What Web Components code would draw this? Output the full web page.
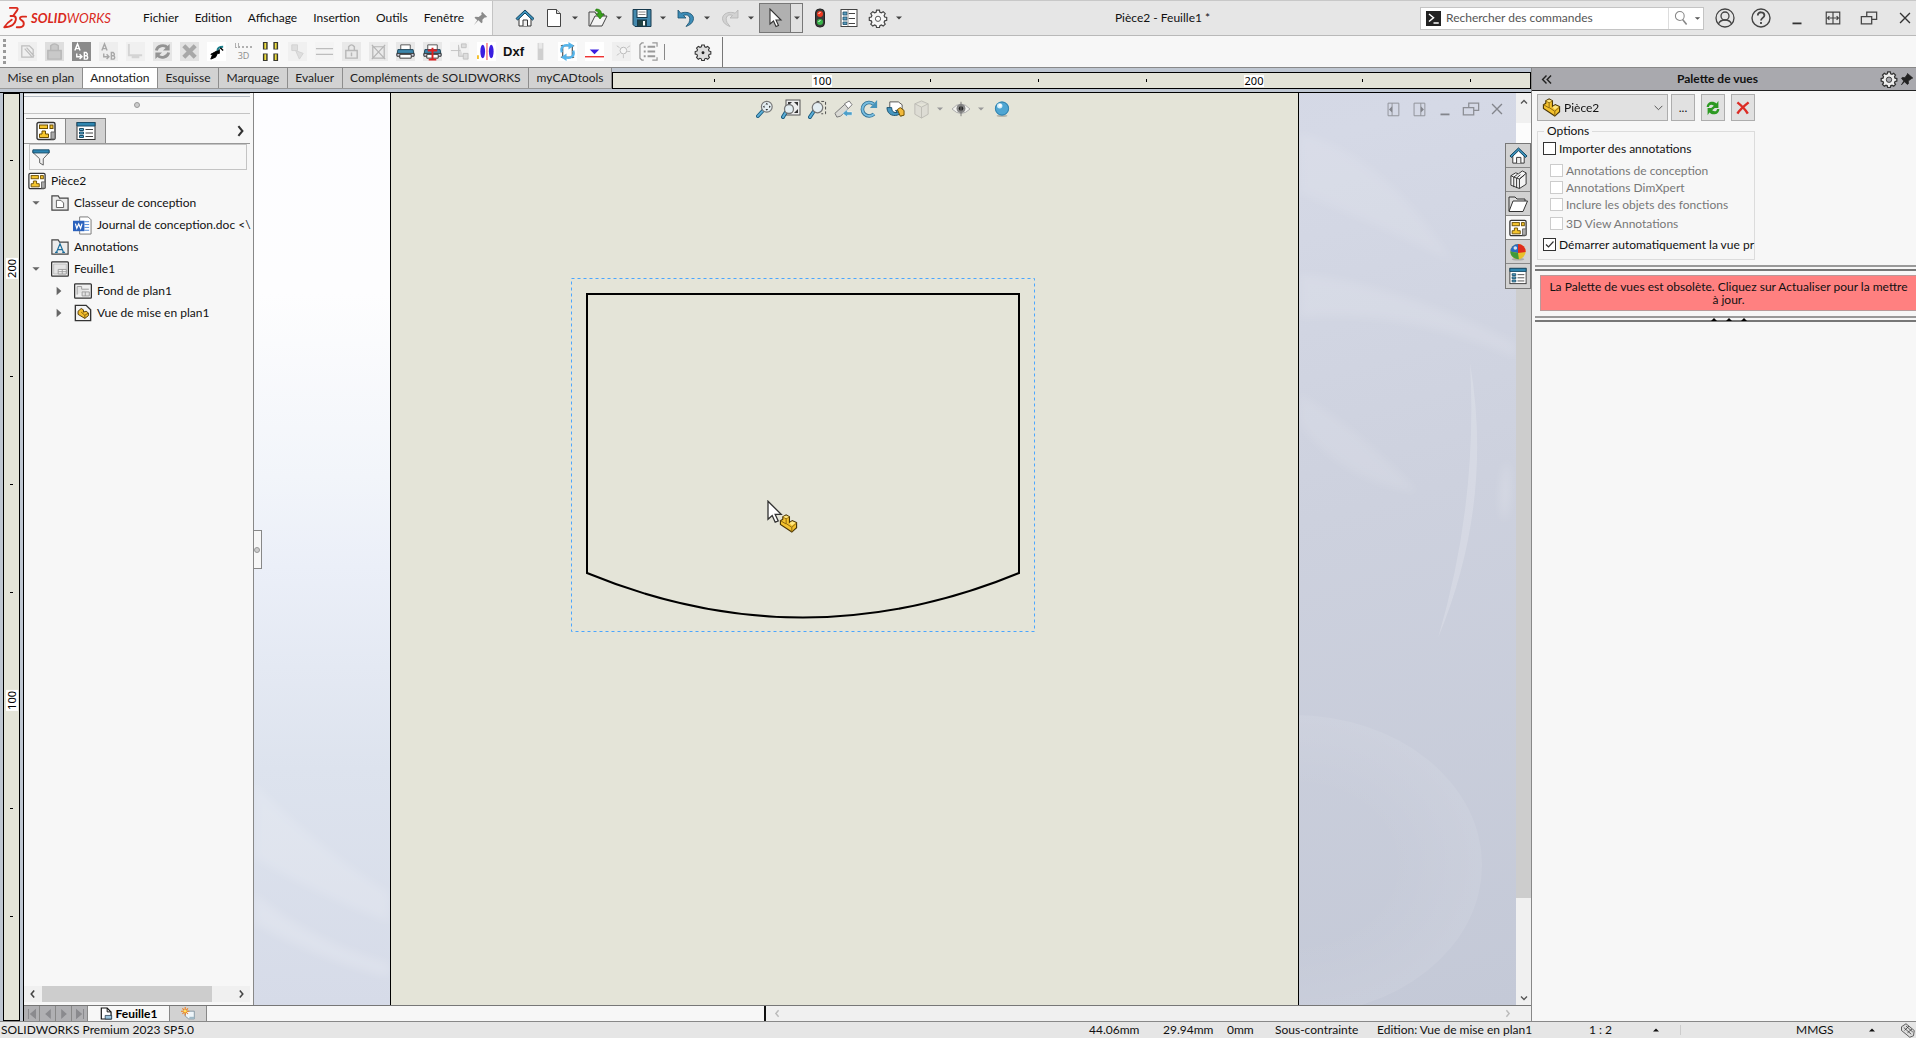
<!DOCTYPE html>
<html lang="fr">
<head>
<meta charset="utf-8">
<title>Pièce2 - Feuille1 *</title>
<style>
html,body{margin:0;height:100%}
body{font:12px/16px Lato,"Open Sans",sans-serif;color:#111;background:#f7f7f7;overflow:hidden}
</style>
</head>
<body>
<sw-app></sw-app>
<script>
const D='#333';
const gearPath='M8.6 2.2h2.8l.5 2 1.5.6 1.8-1.1 2 2-1.1 1.8.6 1.5 2 .5v2.8l-2 .5-.6 1.5 1.1 1.8-2 2-1.8-1.1-1.5.6-.5 2H8.6l-.5-2-1.5-.6-1.8 1.1-2-2 1.1-1.8-.6-1.5-2-.5V9.5l2-.5.6-1.5-1.1-1.8 2-2 1.8 1.1 1.5-.6z';
const house=`<path d="M4 9v9h12V9l-6-6z" fill="#fff" stroke="${D}"/><path d="M8 18v-6h4.5v6" fill="#eee" stroke="${D}"/><path d="M1 10.500 10 2l9 8.500-1.600 1.600L10 5l-7.400 7.100z" fill="#3d93bd" stroke="#12435e"/>`;
const part=`<path d="M1.500 7 4 5.500V3l3.500-2L11 3v6l3-2 4.500 2v5.500L13.500 19 1.500 11z" fill="#f3c12c" stroke="#4a3608" stroke-width="1.200"/><path d="M4 3l3.500 2L11 3M7.500 5v5l6 4 5-4.500M13.500 14v5M1.500 7l6 3.500" fill="none" stroke="#8a650d"/><path d="M4.500 3l3-1.500 3 1.500-3 1.500zM11 9.500l3-1.800 3.500 1.500-4 3z" fill="#ffe67f"/>`;
const drawing=`<rect x="1" y="1.500" width="18" height="17" rx="1.500" fill="#fff" stroke="#333" stroke-width="1.400"/><rect x="3.500" y="4" width="8" height="3.500" fill="#f6c62e" stroke="#6b4d00"/><rect x="14" y="4" width="3" height="3.500" fill="#f6c62e" stroke="#6b4d00"/><path d="M6 10h3.500v3h3v3.500h-9V13H6z" fill="#f6c62e" stroke="#6b4d00"/><path d="M15 11h4v7h-4z" fill="#aaa" stroke="#666"/>`;
const list=`<rect x="1" y="1.500" width="18" height="17" fill="#fff" stroke="#333"/><path d="M1 1.500h18v3.500H1z" fill="#2f86b0" stroke="#1a4d68"/><path d="M3.500 7.500h4v2h-4zM3.500 11h4v2h-4zM3.500 14.500h4v2h-4z" fill="#55a8cf" stroke="#1a4d68"/><path d="M9.500 8.500H17M9.500 12H17M9.500 15.500H17" stroke="#444"/>`;
const printer=`<path d="M5 8V3h10v5" fill="#fff" stroke="#555"/><path d="M2 8h16l1 6H1z" fill="#3c86ab" stroke="#1d4557"/><path d="M1 12h18v3H1z" fill="#ccd" stroke="#333"/><path d="M4 13h12v4H4z" fill="#fff" stroke="#333"/>`;
const magn=(x,y,r)=>`<path d="M${x-r*.7} ${y+r*.7} 2 18" stroke="#1c5d80" stroke-width="4" stroke-linecap="round"/><path d="M${x-r*.7} ${y+r*.7} 2 18" stroke="#5db0d8" stroke-width="2" stroke-linecap="round"/><circle cx="${x}" cy="${y}" r="${r}" fill="#e4eef2" stroke="#777" stroke-width="1.300"/>`;
const ICONS={
home:house, part, drawing, list,
logo:`<g fill="none" stroke="#da291c" stroke-width="1.500" stroke-linecap="round" stroke-linejoin="round"><path d="M5.500 1.500h5q2 0 .8 2L8 8"/><path d="M6 8h2.500c3 .6 2 5-.8 7.200-1.700 1.300-4 1.800-6.700 1.800 1.500-2.500 3.500-4.500 6-6"/><path d="M18.500 8.500h-3c-2.600.3-2.500 2-.5 3 2.400 1.400 2.300 5.100-1.300 5.500H11"/></g>`,
pin:`<path d="M12 1l7 7-2.500.8-1-.3-3 3.300.2 3.200-1.500 1.300-4-4L1 19l4.800-6.700L2 9l1.300-1.300 4.200.2L11.500 5l-.5-1.800z" fill="#8a8a8a"/>`,
pin2:`<path d="M10 2l7 6-2 1-4 3 .3 3.500-1.500 1L6 13l-4 4 3-5-3-3.500 1-1.300 3.500.3 3-4z" fill="#222" stroke="#222"/>`,
doc:`<path d="M3.500 1.500h9l4 4v13h-13z" fill="#fff" stroke="#444"/><path d="M12.500 1.500v4h4" fill="#ddd" stroke="#444"/>`,
open:`<path d="M1 4h6l1 2h8v2" fill="#eee" stroke="#444"/><path d="M1 4v14h13l5-10H7L2 18" fill="#f4f4f4" stroke="#444"/><path d="M8 1c4 0 5.500 2 5.500 5H16l-4 5-4-5h2.300c0-2-1-3-2.800-3z" fill="#39a31b" stroke="#1c6b0b" stroke-width=".6"/>`,
save:`<path d="M1 1.500h18v17H3l-2-2z" fill="#4489ad" stroke="#16394d"/><rect x="5" y="1.500" width="10" height="8" fill="#fff" stroke="#16394d"/><path d="M6.500 4h7M6.500 6.500h7" stroke="#888"/><rect x="5.500" y="12" width="9" height="6.500" fill="#244" stroke="#16394d"/><rect x="11" y="13" width="2" height="4.500" fill="#fff"/>`,
undo:`<path d="M2 2v8h8L7.500 7.500c4-2 8 1 5.500 7l-3 4c8-2.500 9.500-9.500 5-12.500-3.500-2.300-7.500-1.800-10.200-.8z" fill="#3d8db8" stroke="#1b506d" stroke-width=".8"/>`,
redo:`<path d="M18 2v8h-8l2.500-2.500c-4-2-8 1-5.500 7l3 4C2 16 .5 9 5 6c3.500-2.300 7.500-1.800 10.200-.8z" fill="#d2d2d2" stroke="#b4b4b4" stroke-width=".8"/>`,
cursor:`<path d="M5 1v15l3.500-3 2.500 5.500 2.500-1-2.500-5.500h5z" fill="#fff" stroke="#333" stroke-width="1.100"/>`,
traffic:`<rect x="5.500" y="1" width="9" height="18" rx="4" fill="#3a3a3a" stroke="#222"/><circle cx="10" cy="6" r="3" fill="#ef3a22"/><circle cx="10" cy="14" r="3" fill="#39b54a"/><path d="M8.500 5.500l2-1M8.500 13.500l2-1" stroke="#fff"/>`,
options:`<rect x="2" y="1.500" width="16" height="17" fill="#fff" stroke="#444"/><path d="M4 4h4v3H4zM4 9h4v3H4zM4 14h4v2.500H4z" fill="#5b9dbf" stroke="#1a4d68" stroke-width=".8"/><path d="M9.500 5.500H16M9.500 10.500H16M9.500 15.500H16" stroke="#444"/><path d="M9 2v16" stroke="#999"/>`,
gear:`<path d="${gearPath}" fill="#f7f7f7" stroke="#444" stroke-width="1.200"/><circle cx="10" cy="10.800" r="2.600" fill="#fff" stroke="#555"/>`,
gearfull:`<path d="${gearPath}" fill="#ddd" stroke="#333" stroke-width="1.200"/><circle cx="10" cy="10.800" r="1.600" fill="#222"/>`,
gearlight:`<path d="${gearPath}" fill="#eee" stroke="#333" stroke-width="1.400"/><circle cx="10" cy="10.800" r="3" fill="#a9a9ae" stroke="#333"/>`,
sketch:`<rect width="20" height="20" fill="#efefef"/><path d="M4 4h8l4 4v8H4zM7 7l8 9M9 6l8 9" fill="none" stroke="#bdbdbd" stroke-width="1.300"/>`,
lockpage:`<rect width="20" height="20" fill="#dedede"/><path d="M3 9h14v9H3zM6 9V4q4-4 8 0v5" fill="#c9c9c9" stroke="#b7b7b7" stroke-width="1.500"/>`,
abdark:`<rect width="20" height="20" fill="#8b8b8b"/><path d="M3 9l2.800-7L8.500 9M4 7h4M13 11v7h2.500q2-1.800 0-3.500 1.500-1.800-.5-3.500zM13 14.500h2.500M5 12v3.500h5m-2-2.500 2.500 2.500L8 18" fill="none" stroke="#fff" stroke-width="1.500"/>`,
ablight:`<rect width="20" height="20" fill="#eee"/><path d="M3 9l2.800-7L8.500 9M4 7h4M13 11v7h2.500q2-1.800 0-3.500 1.500-1.800-.5-3.500zM13 14.500h2.500M5 12v3.500h5m-2-2.500 2.500 2.500L8 18" fill="none" stroke="#a8a8a8" stroke-width="1.500"/>`,
monitor:`<rect width="20" height="20" fill="#f0f0f0"/><path d="M3 2v12h14M6 16h8" fill="none" stroke="#d4d4d4" stroke-width="2"/>`,
refreshg:`<rect width="20" height="20" fill="#e6e6e6"/><path d="M3.500 9c1-5 8-7 12-3M16.500 11c-1 5-8 7-12 3" fill="none" stroke="#939393" stroke-width="3"/><path d="M17.500 2v7h-7zM2.500 18v-7h7z" fill="#939393"/>`,
xg:`<rect width="20" height="20" fill="#e2e2e2"/><path d="M4 4l12 12M16 4 4 16" stroke="#a8a8a8" stroke-width="4.500"/>`,
arrowk:`<rect width="20" height="20" fill="#fff"/><path d="M4 18l2-5H4l9-5v4h-2l-2 4z" fill="#000" stroke="#000"/><path d="M11 9c0-3 3-4 6-4" fill="none" stroke="#1b7f8c" stroke-width="2"/><path d="M14 6l3 3" stroke="#000" stroke-width="1.500"/>`,
grid4:`<rect width="20" height="20" fill="#fff"/><path d="M2 0h5v8H2zM13 0h5v8h-5zM2 12h5v8H2zM13 12h5v8h-5z" fill="#3a3a30"/><path d="M4.500 1v6M15.500 1v6M4.500 13v6M15.500 13v6" stroke="#f0e040" stroke-width="2"/>`,
hand:`<rect width="20" height="20" fill="#f0f0f0"/><path d="M4 3h6v6H4zM8 9l8 3-4 6z" fill="#dedede" stroke="#d2d2d2"/>`,
lines:`<rect width="20" height="20" fill="#f4f4f4"/><path d="M1 7h18M1 13h18" stroke="#bdbdbd" stroke-width="1.400"/>`,
lock:`<rect width="20" height="20" fill="#e9e9e9"/><path d="M4 9h12v8H4zM7 9V5q3-4 6 0v4M10 11v4" fill="none" stroke="#b8b8b8" stroke-width="1.500"/>`,
lockx:`<rect width="20" height="20" fill="#eaeaea"/><path d="M4 5h12v12H4zM3 3l14 15M17 3 3 18" fill="none" stroke="#b5b5b5" stroke-width="1.300"/>`,
print:`<rect width="20" height="20" fill="#e8e8e8"/>${printer}`,
printr:`<rect width="20" height="20" fill="#e8e8e8"/>${printer}<path d="M10 6v13M5 9h10M6 18.500h8" stroke="#e02020" stroke-width="2"/>`,
flow:`<rect width="20" height="20" fill="#f3f3f3"/><path d="M1 9h10M9 3v12h5M12 2h5v4h-5zM14 12h5v6h-5z" fill="#ddd" stroke="#c2c2c2"/>`,
section:`<rect width="20" height="20" fill="#fff"/><ellipse cx="6" cy="10" rx="2.500" ry="7" fill="#3a1ee0"/><ellipse cx="15" cy="10" rx="2.500" ry="7" fill="#3a1ee0"/><path d="M10.500 1v18" stroke="#e33"/><path d="M1 14v4" stroke="#f4c02a" stroke-width="2"/>`,
column:`<path d="M7 1h6v18H7z" fill="#cfcfcf"/><path d="M8 1h4v6H8z" fill="#e8e8e8"/>`,
cycle:`<rect width="20" height="20" fill="#fff"/><path d="M5 3v14M15 3v14M3 4h14M3 16h14" stroke="#222"/><path d="M4 11c-2-6 3-9 9-7M16 9c2 6-3 9-9 7" fill="none" stroke="#55b4ea" stroke-width="2.500"/><path d="M11 0l6 4-6 4zM9 12l-6 4 6 4z" fill="#55b4ea"/>`,
level:`<rect width="20" height="20" fill="#fff"/><path d="M5 8h10l-5 5z" fill="#3a1ee0"/><path d="M0 15.500h20" stroke="#e33" stroke-width="1.500"/>`,
bulb:`<rect width="20" height="20" fill="#efefef"/><circle cx="12" cy="9" r="3.500" fill="#f5f5f5" stroke="#b8b8b8"/><path d="M12 13v4M5 4l3 2M19 4l-3 2M5 14l3-2M19 10h-3" stroke="#c4c4c4"/>`,
lst:`<path d="M5 1H3L1 3v14l2 2h2M14 1h5v4M14 19h5v-3" fill="none" stroke="#999" stroke-width="1.300"/><path d="M9 5h8M9 10h8M9 15h8M5 5h2M5 10h2M5 15h2" stroke="#999" stroke-width="2"/>`,
zoomfit:magn(12,7.5,6)+`<path d="M12 3l1.500 2h-3zM12 12l-1.500-2h3zM7.500 7.500l2-1.500v3zM16.500 7.500l-2-1.500v3z" fill="#333"/>`,
zoomarea:`<rect x="5" y="1" width="14" height="15" fill="#eee" stroke="#555"/><path d="M7 3h4L7 7zM17 3v4l-4-4zM17 14h-4l4-4z" fill="#333"/>`+magn(8,10,4.5),
zoomsel:`<path d="M9 1.500h9.500v13H14" fill="none" stroke="#444" stroke-dasharray="3 2"/>`+magn(10,8,5.5),
prev:`<path d="M1 14 12 4l4 4-9 9-4 1z" fill="#d9d9d4" stroke="#777"/><path d="M11 4l5-3 3 4-4 4z" fill="#fff" stroke="#777"/><path d="M9 14l5-4v2.500h5v3.500h-5V18z" fill="#4c9fc9" stroke="#fff" stroke-width=".5"/>`,
rotate:`<path d="M15.500 15.500a7.500 7.500 0 1 1-.5-11" fill="none" stroke="#2f6f92" stroke-width="4"/><path d="M15.500 15.500a7.500 7.500 0 1 1-.5-11" fill="none" stroke="#78bde0" stroke-width="2.200"/><path d="M19 0v9h-8z" fill="#4794bb"/>`,
rot3:`<path d="M4 2h9l4 3v8H4z" fill="#fff" stroke="#555"/><path d="M1 8c0 8 8 10 13 7l2 2v-6h-6l2 2c-4 1-6-1-6-5z" fill="#4596c0" stroke="#1c526f"/><path d="M12 10l3-2 4 3v5l-4 1z" fill="#f1b93b" stroke="#6b4d00"/>`,
cube:`<path d="M10 1l7 3v11l-7 4-7-4V4zM3 4l7 3.500L17 4M10 7.500V19" fill="#dddcd4" stroke="#bdbcb4"/>`,
eye:`<path d="M0 10Q10-1 20 10 10 20 0 10z" fill="#f2f2ee" stroke="#a5a5a5"/><circle cx="10" cy="9.500" r="5" fill="#888"/><circle cx="10" cy="9.500" r="2.500" fill="#222"/><path d="M10 2v16" stroke="#777"/>`,
sphere:`<ellipse cx="10" cy="17.500" rx="6" ry="1.500" fill="#b8b8ae"/><circle cx="10" cy="9.500" r="7.800" fill="#4fa6d3"/><circle cx="10" cy="9.500" r="7.300" fill="none" stroke="#2d7ba5"/><circle cx="7.500" cy="6.500" r="3" fill="#d4effb"/><circle cx="8" cy="6" r="1.500" fill="#fff"/>`,
funnel:`<path d="M1 3h18v2l-6.500 7v7l-4-2.500V12L1 5z" fill="#f2f2f2" stroke="#555"/><path d="M1 2h18v3.500H1z" fill="#2d85b2" stroke="#174a66"/>`,
folder:`<path d="M1 2h7l1.500 2.500H19V18H1z" fill="#ececec" stroke="#444" stroke-width="1.300"/><path d="M6 7h5l3 3v5H6z" fill="#fff" stroke="#555"/>`,
folderA:`<path d="M1 2h7l1.500 2.500H19V18H1z" fill="#ececec" stroke="#444" stroke-width="1.300"/><path d="M6 16l4-9.500 4 9.500M7.500 13h5M4.500 16h3M12.500 16h3" fill="none" stroke="#1b6d9b" stroke-width="1.300"/>`,
word:`<path d="M7 1h9l3 3v15H7z" fill="#fff" stroke="#777"/><path d="M12 6h5M12 9h5M12 12h5M12 15h5" stroke="#4a86d8"/><path d="M0 5h12v11H0z" fill="#2b62bd"/><path d="M2.500 8l1.500 5 2-4.500L8 13l1.500-5" fill="none" stroke="#fff" stroke-width="1.300"/>`,
sheet:`<rect x=".7" y="2" width="18.600" height="16" rx="1" fill="#f4f4f4" stroke="#333" stroke-width="1.400"/><path d="M3 4.500h14v11H3z" fill="#e4e4e4" stroke="#bbb"/><path d="M8 15.500v-5h9v5zM8 13h9M12.500 10.500v5" fill="#f4f4f4" stroke="#999"/>`,
sheetbg:`<rect x=".7" y="2" width="18.600" height="16" rx="1" fill="#f0f0f0" stroke="#333" stroke-width="1.400"/><path d="M3.500 14V5h5v3h8M9 11h8v4.500H9zM12.500 11v4.500" fill="#e4e4e4" stroke="#999"/>`,
viewpart:`<path d="M1.500 1.500h12l5 5v12h-17z" fill="#f4f4f4" stroke="#333" stroke-width="1.500"/><path d="M4.500 8 8 5l2.500 1.500V9l3-1 2.500 2v3l-4 3-7.500-4.500z" fill="#f3bd2c" stroke="#4a3608"/><path d="M8 9l4 3.500 4-2.500M12 12.500V16" fill="none" stroke="#7d5b0c"/>`,
books:`<path d="M2 6l5-3 3 1 4-3 4 2v12l-7 4.500L2 16z" fill="#f4f4f4" stroke="#333"/><path d="M2 6l3 1.500V18M5 7.500l4-3M8 8.500l4-3.500M11 9.500l5-4M8 8.500V19M11 9.500v10M5 7.500l6 2 7-6" fill="none" stroke="#333"/>`,
foldero:`<path d="M1 17V3h6l2 2h8v2" fill="#ddd" stroke="#333"/><path d="M1 17.500 5 7h14.500L15 17.500z" fill="#fff" stroke="#333"/>`,
ball:`<ellipse cx="10" cy="18" rx="7" ry="1.500" fill="#aaa"/><circle cx="10" cy="9.500" r="8.500" fill="#e8c02b"/><path d="M10 1a8.500 8.500 0 0 0-8.500 8.500L10 11z" fill="#2a6cc0"/><path d="M10 1a8.500 8.500 0 0 1 8.500 9L10 11z" fill="#e02c1d"/><path d="M1.500 9.500 10 11l1 7C5 18 1.500 14 1.500 9.500z" fill="#3f9a3a"/><circle cx="7" cy="5.500" r="2" fill="#fff" opacity=".8"/>`,
refresh:`<path d="M3 9c0-6 7-8 11-4l2-3v8H8l3-2.500C8 5.500 6 6 5.500 9zM17 11c0 6-7 8-11 4l-2 3v-8h8l-3 2.500c3 2 5 1.500 5.500-1.500z" fill="#2d9a22"/>`,
redx:`<path d="M3 3c5 4 10 9 13 14M17 3C12 7 6 12 3 17" fill="none" stroke="#dc2c25" stroke-width="3"/>`,
search:`<circle cx="8.500" cy="7.500" r="5.500" fill="none" stroke="#888" stroke-width="1.300"/><path d="M12 12l5 6" stroke="#888" stroke-width="2"/>`,
prompt:`<path d="M0 0h20v20H0z" fill="#222"/><path d="M4 4l6 5-6 5M10 16h7" fill="none" stroke="#fff" stroke-width="2"/>`,
user:`<g fill="none" stroke="#444" stroke-width="1.300"><circle cx="10" cy="10" r="9"/><circle cx="10" cy="8" r="4"/><path d="M3.500 16c1-3 3-4 6.500-4s5.500 1 6.500 4"/></g>`,
help:`<circle cx="10" cy="10" r="9" fill="none" stroke="#444" stroke-width="1.400"/><path d="M6.800 7.500c0-4.500 6.600-4 6.600-.3 0 2.500-3.400 2.800-3.400 5.300M10 14v2" fill="none" stroke="#444" stroke-width="1.800"/>`,
mini:`<path d="M5 16h10" stroke="#333" stroke-width="2"/>`,
span:`<path d="M2.500 3.500h15v13h-15zM10 3.500v13M4 10h12M6 8l-2 2 2 2M14 8l2 2-2 2" fill="none" stroke="#444" stroke-width="1.300"/>`,
restore:`<path d="M7.500 8V3.500h11v8H13M1.500 8.500H13v8H1.500z" fill="none" stroke="#444" stroke-width="1.400"/>`,
close:`<path d="M4.500 4.500l11 11M15.500 4.500l-11 11" stroke="#333" stroke-width="1.500"/>`,
dockl:`<path d="M4.500 3.500h12v14h-12zM9 3.500v14" fill="none" stroke="#444"/><path d="M9 7l-3.500 3.500L9 14z" fill="#333"/>`,
dockr:`<path d="M4.500 3.500h12v14h-12zM12 3.500v14" fill="none" stroke="#444"/><path d="M12 7l3.500 3.500L12 14z" fill="#333"/>`,
left:`<path d="M12 4 7 10l5 6" fill="none" stroke="currentColor" stroke-width="2.600"/>`,
right:`<path d="M8 4l5 6-5 6" fill="none" stroke="currentColor" stroke-width="2.600"/>`,
up:`<path d="M4 13l6-6 6 6" fill="none" stroke="currentColor" stroke-width="2.600"/>`,
down:`<path d="M4 7l6 6 6-6" fill="none" stroke="currentColor" stroke-width="2.600"/>`,
chev:`<path d="M3 7l7 7 7-7" fill="none" stroke="#555" stroke-width="1.800"/>`,
dleft:`<path d="M10 4l-6 6 6 6M17 4l-6 6 6 6" fill="none" stroke="#222" stroke-width="2.200"/>`,
first:`<path d="M5 3v14M15 4v12l-7-6z" fill="#8a8a8e" stroke="#8a8a8e" stroke-width="1.500"/>`,
back:`<path d="M14 3v14L6 10z" fill="#8a8a8e"/>`, fwd:`<path d="M6 3v14l8-7z" fill="#8a8a8e"/>`,
last:`<path d="M15 3v14M5 4v12l7-6z" fill="#8a8a8e" stroke="#8a8a8e" stroke-width="1.500"/>`,
sheettab:`<path d="M2 1.500h9l6 6v11H2z" fill="#fff" stroke="#111" stroke-width="1.800"/><path d="M11 1.500v6h6" fill="none" stroke="#111" stroke-width="1.500"/><path d="M8 13h10v5.500H8z" fill="#9cc4dd" stroke="#123"/>`,
addsheet:`<path d="M6 6h13v11h-8l-5-4z" fill="#eef5f9" stroke="#68808e"/><path d="M12 14h7v3h-7z" fill="#9fb9c7"/><path d="M6 0v12M0 6h12M2 2l8 8M10 2l-8 8" stroke="#ef7d1a" stroke-width="1.500"/><circle cx="6" cy="6" r="2" fill="#ffe45c"/>`,
tag:`<path d="M2 5l6-4 11 9-1 7-5 2L2 10z" fill="#ddd" stroke="#333"/><path d="M5 6l10 9M8 4l9 8M6 10l6-6M10 13l6-5" stroke="#333"/>`,
caret:`<path d="M4 7h12l-6 6z" fill="currentColor"/>`,
caretup:`<path d="M4 13h12l-6-6z" fill="currentColor"/>`,
caretr:`<path d="M6 3v14l8-7z" fill="currentColor"/>`
};
const define=(tag,html)=>customElements.define(tag,class extends HTMLElement{
  constructor(){super();this.attachShadow({mode:'open'});}
  connectedCallback(){
    if(this.shadowRoot.childNodes.length) return;
    const t=document.createElement('template');
    t.innerHTML=`<style>*{box-sizing:border-box}button{font:inherit;color:inherit;border:0;background:none;padding:0;margin:0;display:flex;align-items:center;justify-content:center}</style>`+(typeof html==='function'?html(this):html);
    this.shadowRoot.append(t.content.cloneNode(true));
  }
});
const ic=(n,s=20,c='')=>`<sw-icon name="${n}" size="${s}" class="${c}"></sw-icon>`;
const ib=(n,label,s=20,c='')=>`<button class="${c}" aria-label="${label}">${ic(n,s)}</button>`;

define('sw-icon',el=>{const s=el.getAttribute('size')||20;return `<style>:host{display:block;flex:none;width:${s}px;height:${s}px}svg{display:block}</style><svg width="${s}" height="${s}" viewBox="0 0 20 20" aria-hidden="true">${ICONS[el.getAttribute('name')]}</svg>`});

define('sw-split',el=>`<style>:host{display:flex;align-items:center;gap:3px;color:#444}button.i{width:24px}button.c{width:12px}</style>${ib(el.getAttribute('icon'),el.getAttribute('label'),20,'i')}${ib('caret','Plus',10,'c')}`);

define('sw-titlebar',`<style>
:host{display:flex;height:36px;background:#e6e6e6;border-top:1px solid #c8c8c8;border-bottom:1px solid #b9b9b9;align-items:stretch}
.brand{flex:none;width:493px;background:#f7f7f7;border-right:1px solid #c4c4c4;display:flex;align-items:center;padding-left:3px}
.name{flex:none;color:#da291c;font:italic 13px/20px Lato,sans-serif;margin-left:3px;width:112px}
.name b{font-weight:700}
nav{display:flex;gap:16px;flex:none;width:317px;justify-content:space-between}
.pin{margin-left:13px}
.quick{flex:none;display:flex;align-items:center;gap:5px;padding-left:20px}
.quick>button{width:24px;height:24px}
.sel{display:flex;margin-left:-3px;height:30px;border:1px solid #777}
.sel button{background:#b0b0b0;width:30px}.sel button+button{background:#e0e0e0;border-left:1px solid #777;width:12px;color:#444}
h1{flex:1;margin:0;font:inherit;text-align:center;align-self:center;white-space:nowrap}
.search{flex:none;align-self:center;display:flex;align-items:center;width:284px;height:23px;border:1px solid #c4c4c4;background:#fff;padding-left:5px;gap:5px;color:#555}
input{flex:1;min-width:0;border:0;outline:0;font:inherit;padding:0;color:#555}
input::placeholder{color:#555;opacity:1}
.search span{display:flex;align-items:center;gap:4px;border-left:1px solid #ddd;height:21px;padding:0 2px 0 4px;width:35px}
.win{flex:none;display:flex;align-items:center;width:212px;padding-left:3px;overflow:hidden}
.win button{width:36px;height:30px;flex:none}
</style>
<div class="brand">${ic('logo',25)}<span class="name"><b>SOLID</b>WORKS</span>
<nav><button>Fichier</button><button>Edition</button><button>Affichage</button><button>Insertion</button><button>Outils</button><button>Fenêtre</button></nav>${ib('pin','Épingler',15,'pin')}</div>
<div class="quick">${ib('home','Accueil')}<sw-split icon="doc" label="Nouveau"></sw-split><sw-split icon="open" label="Ouvrir"></sw-split><sw-split icon="save" label="Enregistrer"></sw-split><sw-split icon="undo" label="Annuler"></sw-split><sw-split icon="redo" label="Rétablir"></sw-split>
<div class="sel">${ib('cursor','Sélectionner')}${ib('caret','Plus',10)}</div>${ib('traffic','Reconstruire')}${ib('options','Propriétés')}<sw-split icon="gear" label="Options"></sw-split></div>
<h1>Pièce2 - Feuille1 *</h1>
<div class="search">${ic('prompt',15)}<input aria-label="Rechercher des commandes" placeholder="Rechercher des commandes"><span>${ic('search',16)}${ic('caret',9)}</span></div>
<div class="win">${ib('user','Compte')}${ib('help','Aide')}${ib('mini','Réduire',18)}${ib('span','Étendre',18)}${ib('restore','Restaurer',18)}${ib('close','Fermer',18)}</div>`);

define('sw-toolbar',`<style>
:host{display:flex;align-items:center;height:31px;background:#f7f7f7;padding-left:3px}
.grip{border-left:3px dotted #999;height:25px;width:11px}
button{width:27px;height:24px}.dxf{font:bold 13px/20px "Liberation Sans",sans-serif}
.sep{width:1px;height:16px;background:#888;margin:0 24px 0 2px}.end{width:1px;height:30px;background:#777;margin-left:6px}
</style><span class="grip"></span>
${['sketch','lockpage','abdark','ablight','monitor','refreshg','xg','arrowk'].map(n=>ib(n,n,19)).join('')}<sw-3d></sw-3d>${['grid4','hand','lines','lock','lockx','print','printr','flow','section'].map(n=>ib(n,n,19)).join('')}<button class="dxf">Dxf</button>${['column','cycle','level','bulb','lst'].map(n=>ib(n,n,19)).join('')}<span class="sep"></span>${ib('gearfull','Personnaliser',18)}<span class="end"></span>`);
define('sw-3d',`<style>:host{display:block;width:27px;text-align:center;font:9px/8px "Open Sans",sans-serif;color:#8d8d8d}i{display:block;height:5px;width:17px;margin:0 auto 4px;border-bottom:2px dotted #b0b0b0;border-left:4px double #b0b0b0}</style><i></i>3D`);

define('sw-tabs',`<style>
:host{display:flex;flex:0 0 612px;height:21px;border-bottom:1px solid #999;color:#222}
button{flex:1 0 auto;background:#d2d2d2;border-right:1px solid #8d8d8d;height:20px;padding:0 6px;white-space:nowrap}
button[aria-selected=true]{background:#fff}
</style>${['Mise en plan','Annotation','Esquisse','Marquage','Evaluer','Compléments de SOLIDWORKS','myCADtools'].map((t,i)=>`<button role="tab" aria-selected="${i==1}">${t}</button>`).join('')}`);

define('sw-ruler',el=>{const v=el.hasAttribute('vertical');return `<style>
:host{display:flex;overflow:hidden;background:#e4e4d8;border:1px solid #000;font:11px/12px "Noto Sans",sans-serif;color:#000;${v?'flex-direction:column;padding-top:12px':'padding-left:47px'}}
span{flex:0 0 108px;display:flex;align-items:center;justify-content:center}
b{font-weight:400;background:#fff;padding:${v?'1px 0':'0 1px'};${v?'writing-mode:vertical-rl;rotate:180deg':''}}
i{background:#000;${v?'width:3px;height:1px':'width:1px;height:3px'}}
</style>${el.getAttribute('marks').split(',').map(m=>`<span>${m?`<b>${m}</b>`:'<i></i>'}</span>`).join('')}`});

define('sw-tree',`<style>
:host{display:flex;flex-direction:column;flex:none;width:230px;background:#f7f7f7;border-right:1px solid #888;padding-right:3px;overflow:hidden}
.grab{height:21px;border-top:4px double #b5bcc4;border-bottom:1px solid #c4c4c4;display:grid;place-items:center}
.grab i{width:6px;height:6px;border-radius:50%;border:1px solid #999;background:#ccc}
.tabs{display:flex;align-items:flex-end;height:30px;border-bottom:1px solid #999;padding-left:2px}
.tabs button{width:40px;height:25px;border:1px solid #888;border-width:1px 1px 0 0}
.tabs .b{background:#d2d2d2}.tabs .more{margin-left:auto;border:0;width:20px;color:#333}
.filter{display:flex;align-items:center;height:26px;margin:0 3px 0 5px;border:1px solid #c4c4c4;padding-left:2px;gap:4px}
input{flex:1;min-width:0;border:0;background:none;outline:0;font:inherit}
ul{list-style:none;margin:0;padding:0;flex:1}
li{display:flex;align-items:center;height:22px;white-space:nowrap;padding-left:4px;gap:5px;color:#111}
.l1{padding-left:27px}.l2{padding-left:49px}
li.x{padding-left:6px;gap:9px}li.x.l2{padding-left:29px}
li.x sw-icon+sw-icon{margin-right:-4px}li .t{color:#666}
.scroll{display:flex;align-items:center;height:16px;background:#f0f0f0;color:#444;margin-bottom:3px}
.scroll button{width:18px;height:16px}.scroll i{height:16px;width:170px;background:#cdcdcd;margin-right:auto}
</style>
<div class="grab"><i></i></div>
<div class="tabs">${ib('drawing','Arbre')}${ib('list','Propriétés',20,'b')}${ib('right','Suivant',16,'more')}</div>
<label class="filter">${ic('funnel',18)}<input aria-label="Filtre"></label>
<ul><li>${ic('drawing',18)}<span>Pièce2</span></li>
<li class="x">${ic('caret',12,'t')}${ic('folder',18)}<span>Classeur de conception</span></li>
<li class="l2">${ic('word',19)}<span>Journal de conception.doc &lt;\\</span></li>
<li class="l1">${ic('folderA',18)}<span>Annotations</span></li>
<li class="x">${ic('caret',12,'t')}${ic('sheet',18)}<span>Feuille1</span></li>
<li class="x l2">${ic('caretr',12,'t')}${ic('sheetbg',18)}<span>Fond de plan1</span></li>
<li class="x l2">${ic('caretr',12,'t')}${ic('viewpart',18)}<span>Vue de mise en plan1</span></li></ul>
<div class="scroll">${ib('left','Gauche',12)}<i></i>${ib('right','Droite',12)}</div>`);

define('sw-canvas',`<style>
:host{display:block;flex:1;position:relative;overflow:hidden;min-width:0;
background:linear-gradient(165deg,#d3d7e4,#d5d9e6 15%,#cdd1de 50%,#c4c9d7) right/50% 100% no-repeat,linear-gradient(#fdfdff 0,#fdfdfe 22%,#f2f5fa 42%,#ebeff8 52%,#dde3ee 74%,#d6dbe8)}
.arcs{position:absolute;inset:0}
.sheet{position:absolute;left:136px;width:909px;top:0;bottom:0;background:#e4e4d8;border:solid #000;border-width:0 1px}
.sheet svg{display:block}
.handle{position:absolute;left:-1px;top:437px;width:9px;height:39px;background:#f7f7f7;border:1px solid #888;border-left:0;display:grid;place-items:center}
.handle i{width:6px;height:6px;border-radius:50%;border:1px solid #999;background:#ccc}
.view{position:absolute;top:6px;left:498px;display:flex;color:#999}
.view button{width:26px;height:20px}.view .c{width:12px}
.view .e{width:29px}
.win{position:absolute;top:6px;right:6px;display:flex;opacity:.5}.win button{width:26px;height:20px}
.cursor{position:absolute;left:508px;top:407px}.cpart{position:absolute;left:525px;top:421px}
</style>
<svg class="arcs" width="100%" height="100%" aria-hidden="true"><defs><radialGradient id="disc"><stop offset=".5" stop-color="#fff" stop-opacity="0"/><stop offset="1" stop-color="#fff" stop-opacity=".08"/></radialGradient><filter id="soft"><feGaussianBlur stdDeviation="5"/></filter></defs>
<ellipse cx="1040" cy="772" rx="188" ry="150" fill="url(#disc)"/>
<path opacity=".18" fill="#fff" d="M1216 270Q1240 410 1184 545Q1224 410 1216 270z"/>
<g fill="#fff" filter="url(#soft)"><path opacity=".2" d="M1253 365Q1260 400 1250 430Q1242 400 1253 365z"/><path opacity=".12" d="M1045 180Q1140 190 1262 250V265Q1150 215 1045 225z"/><path opacity=".1" d="M1045 40Q1130 60 1200 170Q1120 130 1045 100z"/><path opacity=".1" d="M1045 300Q1110 340 1165 400Q1090 390 1045 330z"/><path opacity=".14" d="M0 690Q70 760 136 800V830Q60 800 0 765z"/><path opacity=".16" d="M0 800Q60 850 136 870V885Q60 865 0 830z"/></g></svg>
<div class="sheet"><svg width="100%" height="620" aria-hidden="true"><rect x="180.500" y="185.500" width="463" height="353" fill="none" stroke="#4ba6ff" stroke-dasharray="3 3"/><path d="M196 480V201h432v279Q412 569 196 480z" fill="none" stroke="#000" stroke-width="2"/></svg></div>
${ic('cursor',24,'cursor')}${ic('part',19,'cpart')}
<div class="handle"><i></i></div>
<div class="view">${ib('zoomfit','Zoom au mieux',18)}${ib('zoomarea','Zoom fenêtre',20)}${ib('zoomsel','Zoom sélection',19)}${ib('prev','Vue précédente',19)}${ib('rotate','Rotation',18)}${ib('rot3','Vue 3D',19)}${ib('cube','Style',19)}${ib('caret','Plus',10,'c')}${ib('eye','Masquer',18,'e')}${ib('caret','Plus',10,'c')}${ib('sphere','Apparence',18,'e')}</div>
<div class="win">${ib('dockl','Ancrer à gauche',18)}${ib('dockr','Ancrer à droite',18)}${ib('mini','Réduire',18)}${ib('restore','Restaurer',18)}${ib('close','Fermer',18)}</div>`);

define('sw-vscroll',`<style>
:host{display:flex;flex-direction:column;flex:none;width:15px;background:#f0f0f0;color:#555}
button{height:30px;flex:none}button:first-of-type{align-items:flex-start;padding-top:4px}
.gap{height:20px;background:#fcfcfc}.thumb{flex:0 1 755px;background:#cdcdcd}.rest{flex:1}button:last-of-type{height:14px}
</style>${ib('up','Haut',10)}<div class="gap"></div><div class="thumb"></div><div class="rest"></div>${ib('down','Bas',10)}`);

define('sw-sidetabs',`<style>
:host{display:flex;flex-direction:column;position:absolute;right:0;top:50px;width:26px;border:1px solid #777}
button{height:24px;background:#d2d2d2;border-bottom:1px solid #888}button:last-child{border-bottom:0}.on{background:#f7f7f7}
</style>${ib('home','Ressources',19)}${ib('books','Bibliothèque',19)}${ib('foldero','Explorateur',20)}${ib('drawing','Palette de vues',18,'on')}${ib('ball','Apparences',18)}${ib('list','Propriétés',18)}`);

define('sw-sheetbar',`<style>
:host{display:flex;flex:none;height:16px;background:#f7f7f7;border-top:1px solid #777}
.n{width:16px;background:#b0b0b3;border-right:1px solid #888}
.tab{width:81px;gap:3px;background:#f7f7f7;font-weight:700;color:#000}
.add{width:38px;background:#d2d2d2;border:1px solid #888;border-width:0 1px}
.fill{flex:1;border-right:2px solid #111}
.h{flex:none;width:765px;background:#f0f0f0;display:flex;justify-content:space-between;color:#bbb;padding:0 15px 0 2px}.h button{width:18px}
</style>${ib('first','Première',14,'n')}${ib('back','Précédente',14,'n')}${ib('fwd','Suivante',14,'n')}${ib('last','Dernière',14,'n')}<button class="tab">${ic('sheettab',13)}Feuille1</button>${ib('addsheet','Ajouter',14,'add')}<span class="fill"></span><div class="h">${ib('left','Gauche',11)}${ib('right','Droite',11)}</div>`);

define('sw-check',el=>`<style>
:host{display:block}
label{display:flex;align-items:center;gap:3px;height:17px;white-space:nowrap}
:host([disabled]){color:#777}
input{appearance:none;flex:none;margin:0;width:13px;height:13px;border:1px solid #333;background:#fff}
input:disabled{border-color:#ccc}
input:checked{background:#fff url('data:image/svg+xml,<svg xmlns="http://www.w3.org/2000/svg" viewBox="0 0 11 11"><path d="M2 5.500l2.500 2.500L9.500 2.500" fill="none" stroke="%23333" stroke-width="1.200"/></svg>')}
</style><label><input type="checkbox" ${el.hasAttribute('checked')?'checked':''} ${el.hasAttribute('disabled')?'disabled':''}><span><slot></slot></span></label>`);

define('sw-palette',`<style>
:host{display:block;flex:none;width:385px;background:#f7f7f7;border-left:1px solid #888;overflow:hidden}
header{display:flex;align-items:center;height:23px;background:#a9a9ae;border-bottom:1px solid #222;padding-left:4px}
h2{flex:1;margin:0;font:700 12px/16px Lato,sans-serif;text-align:center}
header button{width:20px}header button:last-child{width:17px}
.row{display:flex;height:27px;margin:3px 0 0 5px;gap:6px}
.combo{position:relative;width:131px;background:#e1e1e1;border:1px solid #adadad;display:flex;align-items:center;padding-left:4px;margin-right:-3px}
select{appearance:none;border:0;background:none;font:inherit;color:inherit;flex:1;padding:0 0 0 3px;outline:0}
.combo sw-icon:last-child{margin-right:3px}
.row button{width:24px;background:#e1e1e1;border:1px solid #adadad}
fieldset{margin:2px 0 0 5px;width:218px;height:137px;border:1px solid #dcdcdc;padding:1px 4px 0;min-width:0}
legend{padding:0 3px;margin-left:2px;line-height:16px}
fieldset sw-check{margin-left:1px}
.in{margin-left:7px;padding:5px 0 4px}
.in sw-check:last-child{margin-top:2px}
.rule{border-top:2px solid #999;border-bottom:2px solid #777;height:6px;margin:5px 0 0 3px}
.msg{margin:4px -8px 0 8px;height:36px;display:grid;place-items:center;background:#ff8080;border:1px solid #b99;text-align:center;line-height:13px;padding:0 12px 0 5px}
.tri{display:flex;justify-content:center;gap:9px;padding-left:6px}
.tri i{border:3px solid transparent;border-top:0;border-bottom-color:#000;height:3px}
</style>
<header>${ib('dleft','Réduire',13)}<h2>Palette de vues</h2>${ib('gearlight','Options',18)}${ib('pin2','Épingler',15)}</header>
<div class="row"><div class="combo">${ic('part',19)}<select aria-label="Pièce"><option>Pièce2</option></select>${ic('chev',11)}</div><button>...</button>${ib('refresh','Actualiser',18)}${ib('redx','Effacer',16)}</div>
<fieldset><legend>Options</legend><sw-check>Importer des annotations</sw-check>
<div class="in"><sw-check disabled>Annotations de conception</sw-check><sw-check disabled>Annotations DimXpert</sw-check><sw-check disabled>Inclure les objets des fonctions</sw-check><sw-check disabled>3D View Annotations</sw-check></div>
<sw-check checked>Démarrer automatiquement la vue pr</sw-check></fieldset>
<div class="rule"></div><div class="msg">La Palette de vues est obsolète. Cliquez sur Actualiser pour la mettre à jour.</div><div class="rule"><div class="tri"><i></i><i></i><i></i></div></div>`);

define('sw-status',`<style>
:host{display:flex;align-items:center;height:17px;background:#e6e6e6;border-top:1px solid #888;white-space:nowrap;overflow:hidden}
span{flex:none}.m{flex:1;padding-left:1px}
.c1{width:74px}.c2{width:64px}.c3{width:48px}.c4{width:102px}.c5{width:212px}.c6{width:62px}.c7{width:30px;border-right:1px solid #ccc}.c8{width:186px;padding-left:115px}.c9{width:33px}.c10{width:16px}
</style><span class="m">SOLIDWORKS Premium 2023 SP5.0</span><span class="c1">44.06mm</span><span class="c2">29.94mm</span><span class="c3">0mm</span><span class="c4">Sous-contrainte</span><span class="c5">Edition: Vue de mise en plan1</span><span class="c6">1 : 2</span><span class="c7">${ic('caretup',10)}</span><span class="c8">MMGS</span><span class="c9">${ic('caretup',10)}</span><span class="c10">${ic('tag',15)}</span>`);

define('sw-app',`<style>
:host{display:flex;flex-direction:column;height:100vh}
main{flex:1;display:flex;min-height:0;border-top:1px solid #888}
.work{flex:1;min-width:0;display:flex;flex-direction:column;background:#bfc7d2}
.top{display:flex;height:25px;border-bottom:1px solid #000;align-items:flex-start}
.top sw-ruler{flex:1;margin-top:4px;height:17px}
.body{flex:1;display:flex;min-height:0}
.lr{flex:none;width:24px;display:flex;padding-left:3px;border-right:1px solid #000}
.lr sw-ruler{width:17px}
.col{flex:1;min-width:0;display:flex;flex-direction:column}
.row{flex:1;display:flex;min-height:0;position:relative}
</style>
<sw-titlebar></sw-titlebar><sw-toolbar></sw-toolbar>
<main><div class="work"><div class="top"><sw-tabs></sw-tabs><sw-ruler marks=",100,,,,200,,"></sw-ruler></div>
<div class="body"><div class="lr"><sw-ruler vertical marks=",200,,,,100,,"></sw-ruler></div><div class="col"><div class="row"><sw-tree></sw-tree><sw-canvas></sw-canvas><sw-vscroll></sw-vscroll><sw-sidetabs></sw-sidetabs></div><sw-sheetbar></sw-sheetbar></div></div></div>
<sw-palette></sw-palette></main><sw-status></sw-status>`);
</script>
</body>
</html>
